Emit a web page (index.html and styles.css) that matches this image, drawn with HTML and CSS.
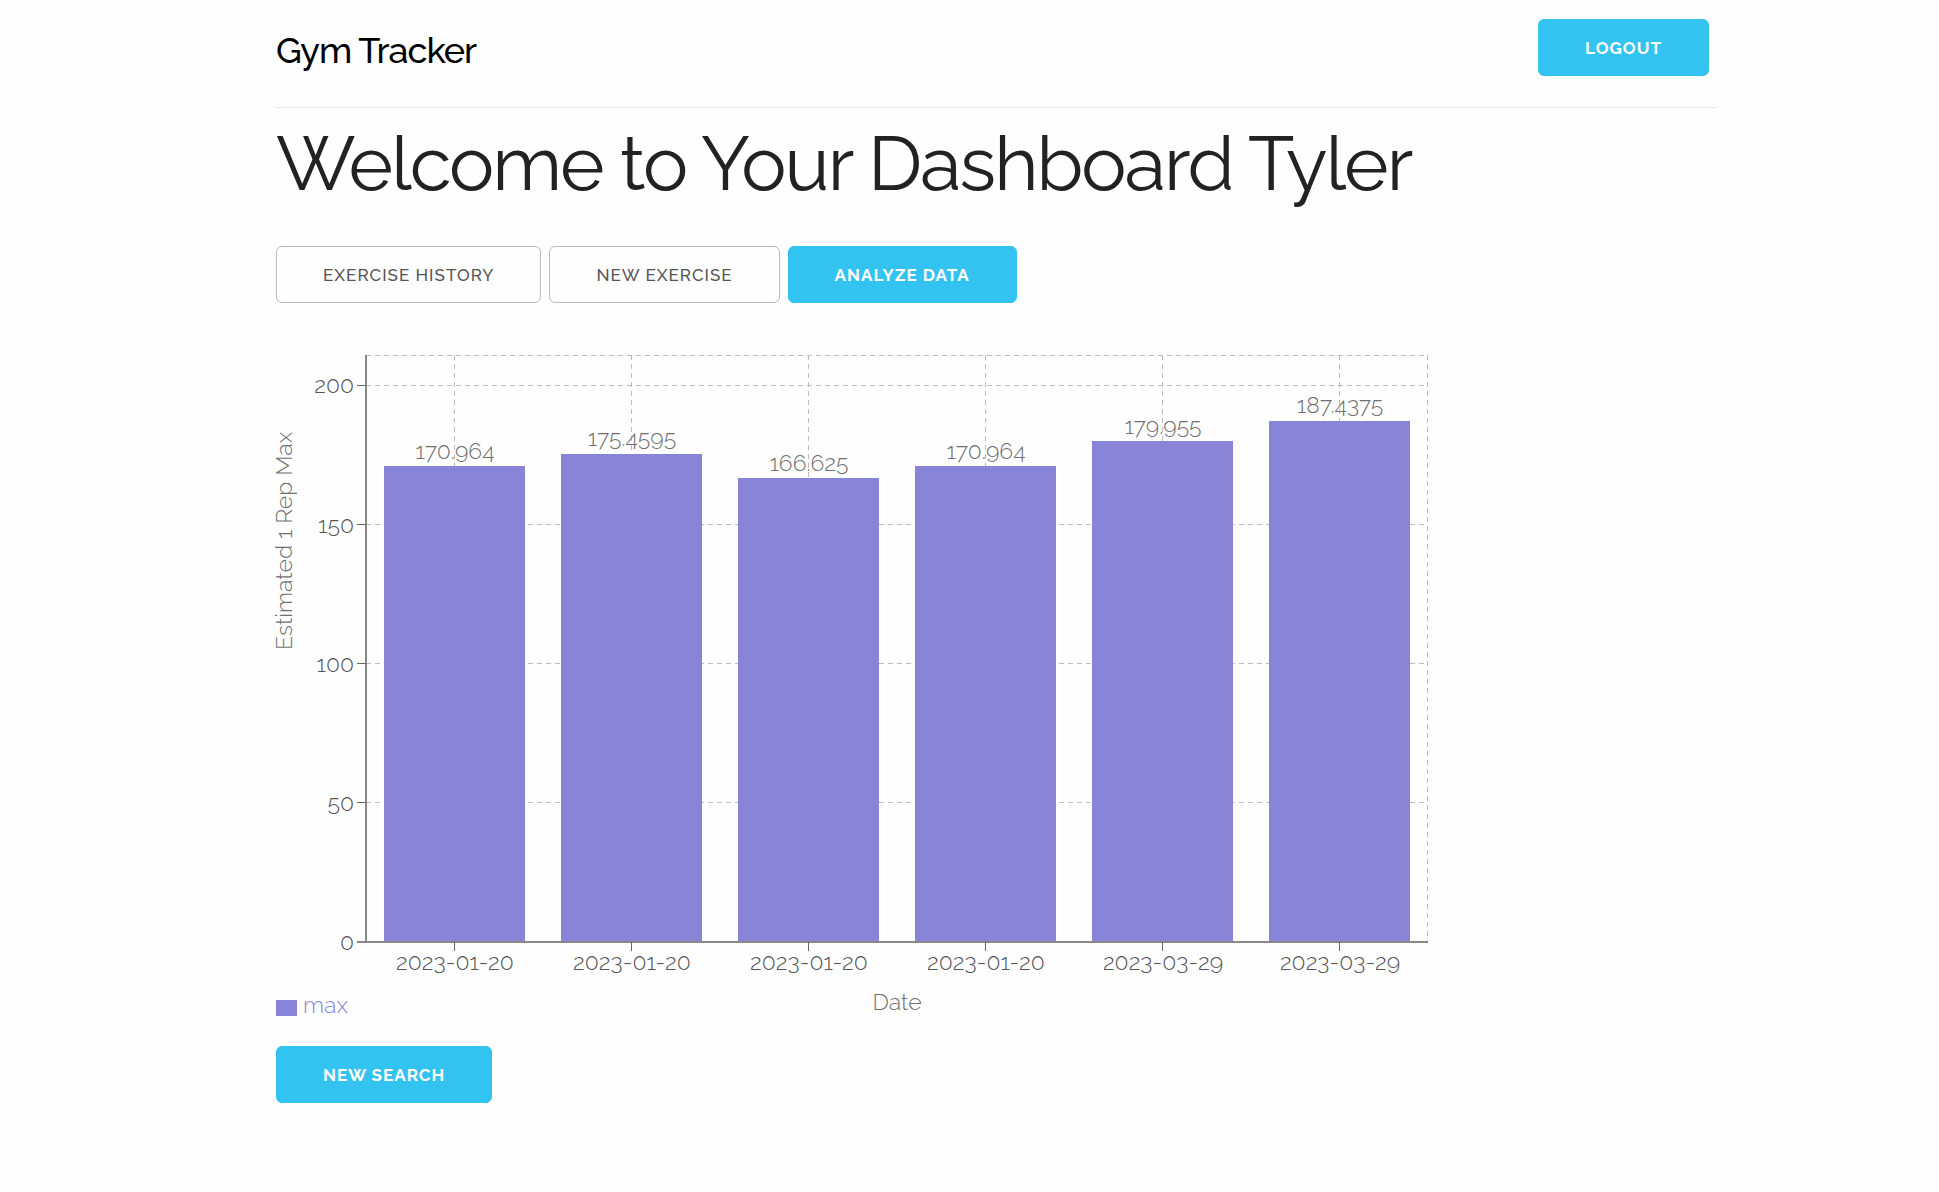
FILE: index.html
```html
<!DOCTYPE html>
<html lang="en">
<head>
<meta charset="utf-8">
<title>Gym Tracker</title>
<meta name="viewport" content="width=device-width, initial-scale=1">
<link rel="stylesheet" href="styles.css">
</head>
<body>
<div class="container">
  <header class="header">
    <a class="brand" href="#">Gym Tracker</a>
    <button class="button primary" type="button">Logout</button>
  </header>
  <main>
    <h1 class="title">Welcome to Your Dashboard Tyler</h1>
    <nav class="actions">
      <button class="button" type="button">Exercise History</button>
      <button class="button" type="button">New Exercise</button>
      <button class="button primary" type="button">Analyze Data</button>
    </nav>
    <svg class="chart" viewBox="0 0 1152 680" role="img" aria-label="Estimated 1 rep max by date">
      <g class="grid">
        <path d="M90 9.5H1152M90 39.5H1152M90 178.5H1152M90 317.5H1152M90 456.5H1152"/>
        <path d="M178.5 9V596M355.5 9V596M532.5 9V596M709.5 9V596M886.5 9V596M1063.5 9V596M1151.5 9V596"/>
      </g>
      <g class="bars">
        <rect x="108" y="120" width="141" height="476"/>
        <rect x="285" y="108" width="141" height="488"/>
        <rect x="462" y="132" width="141" height="464"/>
        <rect x="639" y="120" width="141" height="476"/>
        <rect x="816" y="95" width="141" height="501"/>
        <rect x="993" y="75" width="141" height="521"/>
      </g>
      <path class="axis" d="M90 9V596M81 596H1152"/>
      <path class="tick" d="M81 39.5H90M81 178.5H90M81 317.5H90M81 456.5H90M178.5 596V605M355.5 596V605M532.5 596V605M709.5 596V605M886.5 596V605M1063.5 596V605"/>
      <g class="values">
        <text x="179" y="113">170.964</text>
        <text x="356" y="100">175.4595</text>
        <text x="533" y="125">166.625</text>
        <text x="710" y="113">170.964</text>
        <text x="887" y="88">179.955</text>
        <text x="1064" y="67">187.4375</text>
      </g>
      <g class="x-labels">
        <text x="179" y="624">2023-01-20</text>
        <text x="356" y="624">2023-01-20</text>
        <text x="533" y="624">2023-01-20</text>
        <text x="710" y="624">2023-01-20</text>
        <text x="887" y="624">2023-03-29</text>
        <text x="1064" y="624">2023-03-29</text>
      </g>
      <g class="y-labels">
        <text x="78" y="47">200</text>
        <text x="78" y="187">150</text>
        <text x="78" y="326">100</text>
        <text x="78" y="465">50</text>
        <text x="78" y="604">0</text>
      </g>
      <text class="axis-title" transform="translate(16 195) rotate(-90)">Estimated 1 Rep Max</text>
      <text class="axis-title" x="621" y="664">Date</text>
      <g class="legend">
        <rect x="0" y="654" width="21" height="16"/>
        <text x="27" y="667">max</text>
      </g>
    </svg>
    <button class="button primary" type="button">New Search</button>
  </main>
</div>
</body>
</html>
```
FILE: styles.css
```css
* { box-sizing: border-box; }
body {
  margin: 0;
  padding: 0 0 0 53px;
  background: #fefefe;
  color: #222;
  font-family: Raleway, Lato, "Open Sans", sans-serif;
  font-size: 23px;
  font-weight: 300;
}
.container {
  max-width: 1440px;
  margin: 0 auto;
}
.header {
  display: flex;
  align-items: flex-start;
  justify-content: space-between;
  padding: 19px 7px 31px 0;
  border-bottom: 1px solid #e8e8e8;
}
.brand {
  padding-top: 7px;
  color: #000;
  font-size: 36px;
  font-weight: 500;
  line-height: 48px;
  letter-spacing: -1px;
  text-decoration: none;
}
.title {
  margin: 0;
  padding: 11px 0 37px;
  font-size: 76px;
  font-weight: 400;
  line-height: 90px;
  letter-spacing: -2px;
}
.actions {
  display: flex;
  flex-wrap: wrap;
  gap: 8px;
  margin-bottom: 43px;
}
.button {
  height: 57px;
  padding: 2px 46px 0;
  border: 1px solid #bbb;
  border-radius: 6px;
  background: transparent;
  color: #555;
  font: 500 17px/53px Raleway, Lato, "Open Sans", sans-serif;
  letter-spacing: 1px;
  text-transform: uppercase;
  white-space: nowrap;
  cursor: pointer;
}
.primary {
  border-color: #33c3f0;
  background: #33c3f0;
  color: #fff;
  font-weight: 700;
}
.chart {
  display: block;
  width: 80%;
  height: auto;
  margin-bottom: 20px;
  overflow: visible;
}
.grid { fill: none; stroke: #bbb; stroke-dasharray: 5 4; }
.bars, .legend { fill: #8884d8; }
.axis { fill: none; stroke: #888; stroke-width: 2; }
.tick { fill: none; stroke: #666; }
.values, .axis-title { fill: #707070; text-anchor: middle; }
.x-labels { fill: #555; text-anchor: middle; }
.y-labels { fill: #555; text-anchor: end; }
```
